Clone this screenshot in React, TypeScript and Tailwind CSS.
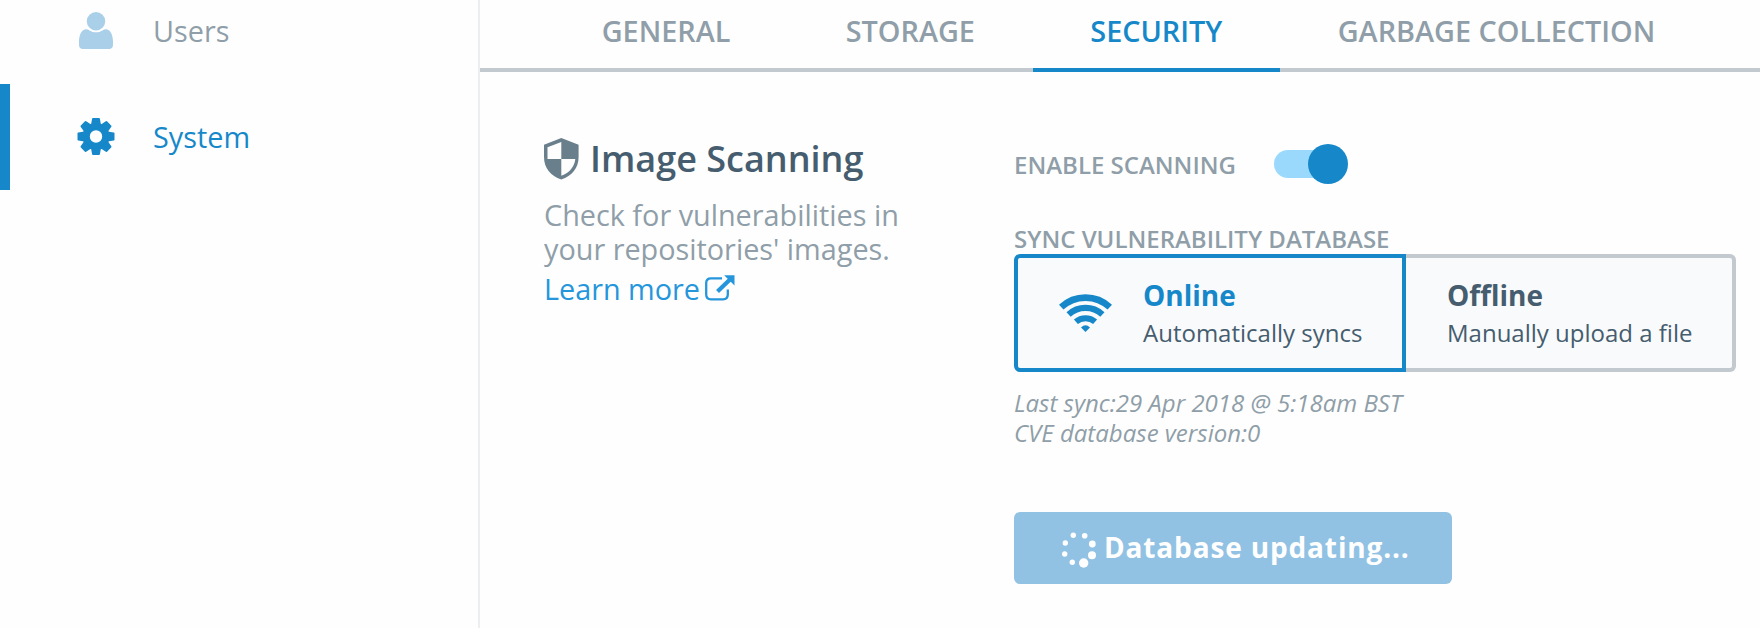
import React from "react";

function UserIcon() {
  return (
    <svg className="h-[38px] w-[34px]" viewBox="0 0 34 38" fill="#a9cfe9">
      <circle cx="17" cy="9.2" r="9.2" />
      <path d="M6.5 17.2C8 17 9.4 17.5 10.6 18.4C14.4 21 19.6 21 23.4 18.4C24.6 17.5 26 17 27.5 17.2C31.5 17.8 34 23 34 30V33C34 35.6 32.4 37 30 37H4C1.6 37 0 35.6 0 33V30C0 23 2.500 17.8 6.500 17.200Z" />
    </svg>
  );
}

function GearIcon() {
  return (
    <svg className="h-[38px] w-[38px]" viewBox="-19 -18.5 38 38" fill="#1688c9">
      <path
        fillRule="evenodd"
        d="M-13.500 0A13.500 13.500 0 1 0 13.500 0A13.500 13.500 0 1 0 -13.500 0ZM-6.200 0A6.200 6.200 0 1 1 6.200 0A6.200 6.200 0 1 1 -6.200 0Z"
      />
      {[0, 45, 90, 135, 180, 225, 270, 315].map((a) => (
        <path key={a} transform={`rotate(${a})`} d="M-5 -11.500L-3.900 -17.800Q-3.700 -18.500 -2.900 -18.500H2.900Q3.700 -18.500 3.900 -17.800L5 -11.500Z" />
      ))}
    </svg>
  );
}

function ShieldIcon() {
  return (
    <svg className="h-[42px] w-[35px]" viewBox="0 0 35 42" fill="#6a7f8c">
      <path
        fillRule="evenodd"
        d="M17.300 0L34.600 6.800V19C34.600 30 28 38 17.300 41.600C6.600 38 0 30 0 19V6.800ZM17.300 4V21H31.300C30.600 28.500 25.600 34.800 17.300 37.800V21H3.500V9.200Z"
      />
    </svg>
  );
}

function ExternalIcon() {
  return (
    <svg className="mt-[3px] h-[26px] w-[30px]" viewBox="0 0 30 26" fill="none">
      <path d="M17 3.300H6Q1.200 3.300 1.200 8V19.500Q1.200 24.300 6 24.300H18Q22.800 24.300 22.800 19.500V14.500" stroke="#2596db" strokeWidth="2.3" />
      <path d="M12.500 16.500L25 4.500" stroke="#2596db" strokeWidth="4.2" />
      <path d="M19.200 0.300H29.500V10.600Z" fill="#2596db" />
    </svg>
  );
}

function WifiIcon() {
  return (
    <svg className="h-[38px] w-[53px]" viewBox="0 0 53 38" fill="none" stroke="#1688c9">
      <path d="M2.200 13.200A35.500 35.500 0 0 1 50.800 13.200" strokeWidth="6.600" />
      <path d="M9.600 20.500A25 25 0 0 1 43.400 20.500" strokeWidth="6.200" />
      <path d="M16.900 27.800A14.500 14.500 0 0 1 36.100 27.800" strokeWidth="6" />
      <path d="M22 33.500Q26.500 29 31 33.500L26.500 38Z" fill="#1688c9" stroke="none" />
    </svg>
  );
}

const dots = [
  [11.3, 3.3, 2.7],
  [22.7, 3.7, 2.8],
  [30.3, 12, 3.4],
  [30, 23.3, 4],
  [21.7, 31, 4.7],
  [10.3, 30.3, 2.7],
  [2.7, 22, 2.7],
  [3.3, 11, 2.7],
];

function Spinner() {
  return (
    <svg className="mt-[4px] h-[36px] w-[35px]" viewBox="0 0 35 36" fill="white">
      {dots.map(([x, y, r], i) => (
        <circle key={i} cx={x} cy={y} r={r} />
      ))}
    </svg>
  );
}

function Tab({ label, active = false }: { label: string; active?: boolean }) {
  return (
    <button
      className={
        "flex items-center whitespace-nowrap border-b-4 px-[57.7px] pb-[6px] text-[28.8px] font-semibold " +
        (active ? "border-[#1688c9] text-[#1688c9]" : "border-[#c2c9cf] text-[#8f9ea8]")
      }
    >
      {label}
    </button>
  );
}

export default function App() {
  return (
    <div className="flex h-[628px] w-[1760px] overflow-hidden bg-[#fefefe] font-['Open_Sans',sans-serif] text-[28.8px] text-[#8f9ea8]">
      <aside className="w-[480px] shrink-0 border-r-2 border-[#eceff1]">
        <div className="-mt-[22px] flex h-[106px] items-center">
          <span className="flex w-[153px] justify-center pl-[39px]">
            <UserIcon />
          </span>
          Users
        </div>
        <div className="flex h-[106px] items-center border-l-10 border-[#1688c9] text-[#1688c9]">
          <span className="flex w-[143px] justify-center pl-[29px]">
            <GearIcon />
          </span>
          System
        </div>
      </aside>
      <main className="w-[1280px]">
        <nav className="flex h-[72px]">
          <div className="w-[64px] border-b-4 border-[#c2c9cf]" />
          <Tab label="GENERAL" />
          <Tab label="STORAGE" />
          <Tab label="SECURITY" active />
          <Tab label="GARBAGE COLLECTION" />
          <div className="flex-1 border-b-4 border-[#c2c9cf]" />
        </nav>
        <div className="flex pl-[64px]">
          <section className="w-[470px] pt-[64px] leading-[34px]">
            <h2 className="flex h-[46px] items-center gap-[11px] text-[36px] font-semibold text-[#455d6e]">
              <ShieldIcon />
              Image Scanning
            </h2>
            <p className="mt-[16px] w-[380px]">Check for vulnerabilities in your repositories' images.</p>
            <a className="mt-[6px] flex items-start gap-[5px] text-[#2596db]">
              Learn more <ExternalIcon />
            </a>
          </section>
          <section className="w-[722px] pt-[72px]">
            <div className="flex h-[40px] items-center">
              <span className="w-[260px] pt-[2px] text-[24px] leading-[30px] font-semibold">ENABLE SCANNING</span>
              <span className="flex h-[28px] w-[68px] items-center rounded-full bg-[#9bd9fc] pl-[34px]">
                <span className="h-[40px] w-[40px] shrink-0 rounded-full bg-[#1688c9]" />
              </span>
            </div>
            <div className="mt-[40px] h-[30px] text-[24px] leading-[30px] font-semibold">SYNC VULNERABILITY DATABASE</div>
            <div className="flex h-[118px]">
              <div className="flex w-[392px] items-center rounded-l-[6px] border-4 border-[#1688c9] bg-[#f9fafc] pl-[41px]">
                <WifiIcon />
                <div className="ml-[31px] pt-[3px]">
                  <div className="text-[28px] leading-[37px] font-bold text-[#1688c9]">Online</div>
                  <div className="text-[24px] leading-[38px] text-[#455d6e]">Automatically syncs</div>
                </div>
              </div>
              <div className="flex w-[330px] items-center rounded-r-[6px] border-4 border-l-0 border-[#c2c9cf] bg-[#f9fafc] pl-[41px] text-[#455d6e]">
                <div className="pt-[3px]">
                  <div className="text-[28px] leading-[37px] font-bold">Offline</div>
                  <div className="text-[24px] leading-[38px]">Manually upload a file</div>
                </div>
              </div>
            </div>
            <div className="mt-[16px] text-[24px] leading-[30px] italic">
              <div>Last sync:29 Apr 2018 @ 5:18am BST</div>
              <div>CVE database version:0</div>
            </div>
            <button className="mt-[64px] flex h-[72px] w-[438px] items-center rounded-[6px] bg-[#92c2e3] pl-[48px] text-[28px] font-bold tracking-[0.85px] text-white">
              <Spinner />
              <span className="-mt-[2px] ml-[7px]">Database updating...</span>
            </button>
          </section>
        </div>
      </main>
    </div>
  );
}
